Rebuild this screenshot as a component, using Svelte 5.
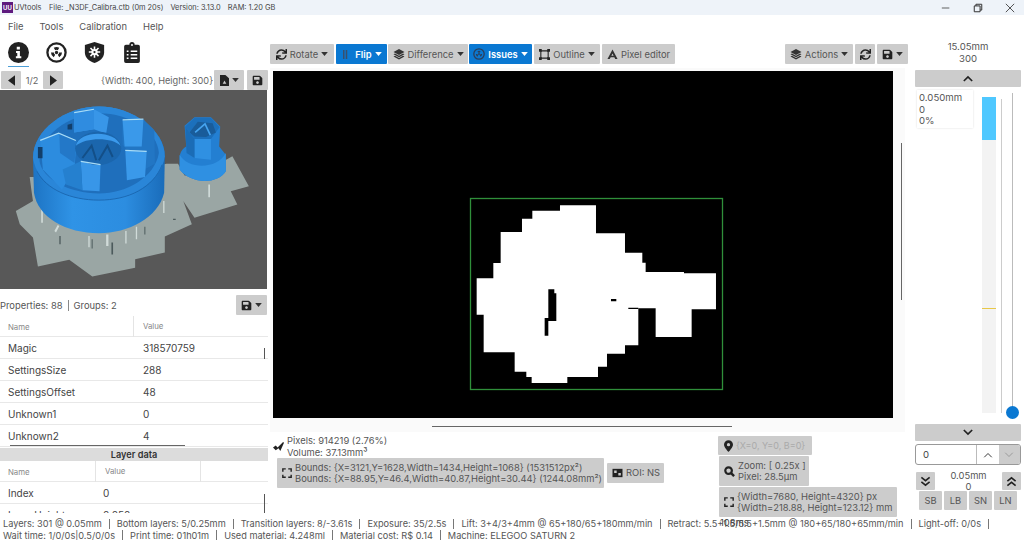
<script>
  const propertyRows = [
    ['Magic', '318570759'],
    ['SettingsSize', '288'],
    ['SettingsOffset', '48'],
    ['Unknown1', '0'],
    ['Unknown2', '4']
  ];
  const layerRows = [
    ['Index', '0'],
    ['LayerHeight', '0.050mm']
  ];
  const line1 = ['Layers: 301 @ 0.05mm', 'Bottom layers: 5/0.25mm', 'Transition layers: 8/-3.61s', 'Exposure: 35/2.5s', 'Lift: 3+4/3+4mm @ 65+180/65+180mm/min', 'Retract: 5.5+1.5/5.5+1.5mm @ 180+65/180+65mm/min', 'Light-off: 0/0s', ''];
  const line2 = ['Wait time: 1/0/0s|0.5/0/0s', 'Print time: 01h01m', 'Used material: 4.248ml', 'Material cost: R$ 0.14', 'Machine: ELEGOO SATURN 2'];

  const savePath = 'M433.941 129.941l-83.882-83.882A48 48 0 0 0 316.118 32H48C21.49 32 0 53.49 0 80v352c0 26.51 21.49 48 48 48h352c26.51 0 48-21.49 48-48V163.882a48 48 0 0 0-14.059-33.941zM224 416c-35.346 0-64-28.654-64-64 0-35.346 28.654-64 64-64s64 28.654 64 64c0 35.346-28.654 64-64 64zm96-304.52V212c0 6.627-5.373 12-12 12H76c-6.627 0-12-5.373-12-12V108c0-6.627 5.373-12 12-12h228.52c3.183 0 6.235 1.264 8.485 3.515l3.48 3.48A11.996 11.996 0 0 1 320 111.48z';
  const syncPath = 'M440.65 12.57l4 82.77A247.16 247.16 0 0 0 255.83 8C134.73 8 33.91 94.92 12.29 209.82A12 12 0 0 0 24.09 224h49.05a12 12 0 0 0 11.67-9.26 175.91 175.91 0 0 1 317-56.94l-101.46-4.86a12 12 0 0 0-12.57 12v47.41a12 12 0 0 0 12 12H500a12 12 0 0 0 12-12V12a12 12 0 0 0-12-12h-47.37a12 12 0 0 0-11.98 12.57zM255.83 432a175.61 175.61 0 0 1-146-77.8l101.8 4.87a12 12 0 0 0 12.57-12v-47.4a12 12 0 0 0-12-12H12a12 12 0 0 0-12 12V500a12 12 0 0 0 12 12h47.35a12 12 0 0 0 12-12.6l-4.15-82.57A247.17 247.17 0 0 0 255.83 504c121.11 0 221.93-86.92 243.55-201.82a12 12 0 0 0-11.8-14.18h-49.05a12 12 0 0 0-11.67 9.26A175.86 175.86 0 0 1 255.83 432z';
</script>

{#snippet caret(color = '#333')}
  <svg class="caret" viewBox="0 0 10 6" width="7" height="4"><path d="M0 0h10L5 6z" fill={color} /></svg>
{/snippet}

{#snippet save(size = 12)}
  <svg viewBox="0 0 448 512" width={size} height={size}><path d={savePath} fill="#222" /></svg>
{/snippet}

{#snippet sync(size = 12)}
  <svg viewBox="0 0 512 512" width={size} height={size}><path d={syncPath} fill="#222" /></svg>
{/snippet}

{#snippet layers(size = 12)}
  <svg viewBox="0 0 24 24" width={size} height={size}><path d="M12 2 23 8l-11 6L1 8zM4 11l8 4.4 8-4.4 3 1.6-11 6-11-6zm0 4.6 8 4.4 8-4.4 3 1.6-11 6-11-6z" fill="#333" /></svg>
{/snippet}

{#snippet corners(size = 12)}
  <svg viewBox="0 0 24 24" width={size} height={size}><path d="M2 9V2h7M15 2h7v7M22 16v6h-7M9 22H2v-6" fill="none" stroke="#222" stroke-width="3.4" /></svg>
{/snippet}

{#snippet radiation(size, fg, bg)}
  <svg viewBox="0 0 24 24" width={size} height={size}>
    <circle cx="12" cy="12" r="10.4" fill={bg} stroke={fg} stroke-width="2.6" />
    <circle cx="12" cy="12" r="1.9" fill={fg} />
    <path d="M8.9 6.6A6.3 6.3 0 0 1 15.1 6.6L13.5 9.4A3 3 0 0 0 10.5 9.4zM18.3 12A6.3 6.3 0 0 1 15.15 17.45L13.5 14.6A3 3 0 0 0 15 12zM8.85 17.45A6.3 6.3 0 0 1 5.7 12H9A3 3 0 0 0 10.5 14.6z" fill={fg} />
  </svg>
{/snippet}

<div class="app">
  <header class="title">
    <span class="logo">UU</span>
    <span class="name">UVtools</span>
    <span>File: _N3DF_Calibra.ctb (0m 20s)</span>
    <span>Version: 3.13.0</span>
    <span>RAM: 1.20 GB</span>
    <div class="win">
      <svg viewBox="0 0 12 12" width="10" height="10"><path d="M1 6h9" stroke="#444" stroke-width="1" /></svg>
      <svg viewBox="0 0 12 12" width="10" height="10"><path d="M1.5 3.5h7v7h-7zM3.5 3.5v-2h7v7h-2" fill="none" stroke="#333" stroke-width="1.2" /></svg>
      <svg viewBox="0 0 12 12" width="10" height="10"><path d="M1 1l10 10M11 1 1 11" stroke="#444" stroke-width="1.1" /></svg>
    </div>
  </header>

  <nav class="menu">
    <span>File</span><span>Tools</span><span>Calibration</span><span>Help</span>
  </nav>

  <main class="main">
    <section class="left">
      <div class="tabs">
        <div class="tab active">
          <svg viewBox="0 0 24 24" width="21" height="21"><circle cx="12" cy="12" r="12" fill="#222" /><path d="M10 5.5h3.6v3H10zM9.2 10.4h4.4v6h1.6v2.2H9v-2.2h1.6v-3.8H9.2z" fill="#fff" /></svg>
        </div>
        <div class="tab">{@render radiation(21, '#222', '#fff')}</div>
        <div class="tab">
          <svg viewBox="0 0 24 24" width="21" height="21">
            <path d="M12 0 23 3.4v8.4C23 18 18.4 22 12 24 5.6 22 1 18 1 11.8V3.4z" fill="#222" />
            <circle cx="12" cy="11.5" r="3.6" fill="#fff" />
            <path d="M12 5v13M5.5 11.5h13M7.4 6.9l9.2 9.2M16.6 6.9l-9.2 9.2" stroke="#fff" stroke-width="1.8" />
            <circle cx="12" cy="11.5" r="1.3" fill="#222" />
          </svg>
        </div>
        <div class="tab">
          <svg viewBox="0 0 18 24" width="16" height="21">
            <path d="M2 3h4a3 3 0 0 1 6 0h4a2 2 0 0 1 2 2v17a2 2 0 0 1-2 2H2a2 2 0 0 1-2-2V5a2 2 0 0 1 2-2z" fill="#222" />
            <circle cx="9" cy="3.4" r="1.1" fill="#fff" />
            <path d="M7.5 10.5H15M7.5 14.5H15M7.5 18.5H15M3 10.5h2M3 14.5h2M3 18.5h2" stroke="#fff" stroke-width="1.6" />
          </svg>
        </div>
      </div>

      <div class="pager">
        <button class="btn sq" aria-label="Previous"><svg viewBox="0 0 8 12" width="7" height="11"><path d="M8 0v12L0 6z" fill="#222" /></svg></button>
        <span class="page">1/2</span>
        <button class="btn sq" aria-label="Next"><svg viewBox="0 0 8 12" width="7" height="11"><path d="M0 0v12l8-6z" fill="#222" /></svg></button>
        <span class="dims">{'{'}Width: 400, Height: 300{'}'}</span>
        <button class="btn file" aria-label="Export">
          <svg viewBox="0 0 20 24" width="9" height="11"><path d="M0 0h12l8 7v17H0z" fill="#222" /><path d="M6 19l4-7 4 7z" fill="#ccc" /></svg>
          {@render caret()}
        </button>
        <button class="btn sq2" aria-label="Save">{@render save(11)}</button>
      </div>

      <div class="thumb">
        <svg viewBox="0 0 810 600" width="267" height="199" preserveAspectRatio="none">
          <defs>
            <linearGradient id="wall" x1="0" x2="1" y1="0" y2="0">
              <stop offset="0" stop-color="#1d74c4" />
              <stop offset=".3" stop-color="#2f93e6" />
              <stop offset=".7" stop-color="#2c8de0" />
              <stop offset="1" stop-color="#1a6cba" />
            </linearGradient>
          </defs>
          <rect width="810" height="600" fill="#585858" />
          <path d="M90 262H130V300L505 222H540L560 258H600L705 200 755 290 700 305 720 345 590 385 556 335 582 405 500 442V490L410 510V536L280 562 210 512 115 532 100 445 60 405 48 365 100 335 95 300z" fill="#9aa6a4" />
          <g fill="#dfe8e6" opacity=".8">
            <path d="M125 360h5v40h-5zM165 425l10-18 5 3-10 20zM268 440h4v34h-4zM322 436h7v34h-7zM380 425h4v38h-4zM412 412h4v38h-4zM495 335h4v36h-4zM632 285h5v38h-5z" />
          </g>
          <g fill="#4c5a5c">
            <path d="M180 440h4v25h-4zM278 450h3v28h-3zM338 460h5v36h-5zM438 412h3v24h-3zM525 388h8v4h-8z" />
          </g>

          <path d="M100 205C100 120 200 50 300 50 400 50 500 120 500 200L498 310C480 385 390 432 300 432 200 432 115 385 103 310z" fill="url(#wall)" />
          <path d="M100 205C100 120 200 50 300 50 400 50 500 120 500 200 490 275 400 332 300 332 200 332 112 285 100 205z" fill="#2a86d8" />
          <path d="M112 245C140 300 215 332 300 332 390 332 465 295 492 225" stroke="#1b68b2" stroke-width="3" fill="none" />
          <path d="M120 215C115 140 210 72 300 70 395 70 478 125 482 190 470 262 385 312 300 312 210 312 128 268 120 215z" fill="#1f6fbc" />

          <path d="M225 68 285 58 330 82 322 132 285 118 225 128z" fill="#3896e8" />
          <path d="M225 128 285 118 285 60 225 68z" fill="#2f8ce0" />
          <path d="M370 90 435 88 468 122 470 222 438 240 372 165z" fill="#2276c4" />
          <path d="M372 92 435 90 430 170 378 170z" fill="#3a99ea" />
          <path d="M122 152 178 130 232 152 226 240 188 300 130 240z" fill="#2c8cdf" />
          <path d="M180 130 232 152 226 220 182 190z" fill="#2378c8" />
          <path d="M380 182 445 185 440 262 385 272z" fill="#3a99ea" />
          <path d="M245 215 305 225 302 305 250 302z" fill="#3896e8" />
          <path d="M190 240 245 215 250 302 200 285z" fill="#2580cf" />
          <ellipse cx="298" cy="176" rx="70" ry="50" fill="#1b66ad" />
          <path d="M230 168C240 122 348 118 366 168 340 142 262 142 230 168z" fill="#3b9aec" />
          <path d="M250 205 278 168 292 212M300 212 326 168 342 202" stroke="#134f88" stroke-width="6" fill="none" />
          <path d="M115 172h14v34h-14zM205 105l14-4v18h-14z" fill="#123e6a" />
          <path d="M225 68 285 58M372 90 435 88M122 152 178 130 230 152M380 182 445 185M245 215 305 225" stroke="#a8dcf6" stroke-width="3.5" fill="none" />

          <path d="M545 200C548 178 565 170 565 170L560 108 590 82 640 82 668 110 665 170 685 195V245C660 285 580 285 545 240z" fill="#237fd2" />
          <path d="M545 195C570 240 660 240 685 190V245C660 285 580 285 545 240z" fill="#2f90e2" />
          <path d="M562 110 590 84 640 84 666 112 640 148 590 148z" fill="#1c70bc" />
          <path d="M575 128 600 96 645 100 655 128 625 142 590 140z" fill="#195c9a" />
          <path d="M592 128 622 102 638 136" stroke="#45a4f0" stroke-width="5" fill="none" />
          <path d="M590 148 640 148 640 210 590 205z" fill="#2f90e2" />
          <path d="M562 110 590 148 590 205 566 190z" fill="#1b6cb6" />
        </svg>
      </div>

      <div class="props-head">
        <span>Properties: 88</span><i></i><span>Groups: 2</span>
        <button class="btn file" aria-label="Save properties">{@render save(11)}{@render caret()}</button>
      </div>

      <div class="grid-head props"><span>Name</span><span>Value</span></div>
      <div class="rows">
        {#each propertyRows as row}
          <div class="row props"><span>{row[0]}</span><span>{row[1]}</span></div>
        {/each}
        <div class="vbar one"></div>
      </div>
      <div class="hbar"></div>

      <div class="layer-title">Layer data</div>
      <div class="grid-head layer"><span>Name</span><span>Value</span><span></span></div>
      <div class="rows clipped">
        {#each layerRows as row}
          <div class="row layer"><span>{row[0]}</span><span>{row[1]}</span></div>
        {/each}
        <div class="vbar two"></div>
      </div>
    </section>

    <section class="center">
      <div class="toolbar">
        <button class="btn tool w64">{@render sync(11)}Rotate{@render caret()}</button>
        <button class="btn tool blue w51">
          <svg viewBox="0 0 12 12" width="11" height="11"><path d="M3 1v10M6 1v10" stroke="#3a4f6a" stroke-width="1.6" /></svg>
          Flip{@render caret('#fff')}
        </button>
        <button class="btn tool w80">{@render layers()}Difference{@render caret()}</button>
        <button class="btn tool blue w63">{@render radiation(12, '#2b3f5c', '#0a78d2')}Issues{@render caret('#fff')}</button>
        <button class="btn tool w66">
          <svg viewBox="0 0 12 12" width="11" height="11"><path d="M2 2h8v8H2z" fill="none" stroke="#222" stroke-width="1.2" /><path d="M0 0h3v3H0zM9 0h3v3H9zM0 9h3v3H0zM9 9h3v3H9z" fill="#222" /></svg>
          Outline{@render caret()}
        </button>
        <button class="btn tool w73">
          <svg viewBox="0 0 12 12" width="11" height="11"><path d="M6 .5 11.5 11H9L8 9H4l-1 2H.5zM6 5 4.8 7.4h2.4z" fill="#333" /></svg>
          Pixel editor
        </button>
        <span class="spacer"></span>
        <button class="btn tool w68">{@render layers()}Actions{@render caret()}</button>
        <button class="btn tool icon" aria-label="Refresh">{@render sync(11)}</button>
        <button class="btn tool icon2" aria-label="Save">{@render save(11)}{@render caret()}</button>
      </div>

      <div class="viewport">
        <div class="canvas">
          <svg viewBox="0 0 620 347" width="620" height="347">
            <rect x="197.5" y="127.5" width="252" height="191" fill="none" stroke="#2f8f3a" stroke-width="1.3" />
            <g transform="translate(187 119) scale(.3333)">
              <path fill="#fff" d="M300 46H408V130H495V188H547V218H557V246H672V250H768V358H695V441H587V355H535V466H495V491H441V530H414V561H322V579H215V561H199V545H164V487H71V374H50V265H100V219H122V126H186V86H217V62H300z" />
              <path fill="#000" d="M265 298H283V310H289V393H265V437H254V384H265zM453 327H469V334H453zM505 353H535V357H505z" />
            </g>
          </svg>
        </div>
        <div class="scroll-h"></div>
        <div class="scroll-v"></div>
      </div>

      <div class="info">
        <div class="info-left">
          <div class="pixels">
            <svg viewBox="0 0 12 12" width="11" height="11"><path d="M0 7 3 5l2 2 6-6 1 1-4 9-2-3-3 2z" fill="#222" /></svg>
            <div>Pixels: 914219 (2.76%)<br />Volume: 37.13mm³</div>
          </div>
          <div class="bounds-row">
            <div class="chip bounds">
              {@render corners(10)}
              <div>Bounds: {'{'}X=3121,Y=1628,Width=1434,Height=1068{'}'} (1531512px²)<br />Bounds: {'{'}X=88.95,Y=46.4,Width=40.87,Height=30.44{'}'} (1244.08mm²)</div>
            </div>
            <div class="chip roi">
              <svg viewBox="0 0 12 12" width="11" height="10"><path d="M0 1h12v10H0z" fill="#222" /><path d="M2 3h3v3H2zM7 6h3v3H7z" fill="#ccc" /></svg>
              ROI: NS
            </div>
          </div>
        </div>
        <div class="info-right">
          <div class="chip pos">
            <svg viewBox="0 0 10 13" width="9" height="12"><path fill-rule="evenodd" d="M5 0a5 5 0 0 1 5 5c0 3-5 8-5 8S0 8 0 5a5 5 0 0 1 5-5zm0 3.2a1.8 1.8 0 1 0 0 3.6 1.8 1.8 0 0 0 0-3.6z" fill="#222" /></svg>
            <span>{'{'}X=0, Y=0, B=0{'}'}</span>
          </div>
          <div class="chip zoom">
            <svg viewBox="0 0 12 12" width="11" height="11"><circle cx="5" cy="5" r="3.6" fill="none" stroke="#222" stroke-width="2.4" /><path d="M7.5 7.5 11 11" stroke="#222" stroke-width="2.6" /></svg>
            <div>Zoom: [ 0.25x ]<br />Pixel: 28.5µm</div>
          </div>
          <div class="chip size">
            {@render corners(10)}
            <div>{'{'}Width=7680, Height=4320{'}'} px<br />{'{'}Width=218.88, Height=123.12{'}'} mm</div>
          </div>
          <span class="ms">108ms</span>
        </div>
      </div>
    </section>

    <aside class="right">
      <div class="top-read">15.05mm<br />300</div>
      <button class="btn wide" aria-label="Up"><svg viewBox="0 0 12 8" width="10" height="7"><path d="M1 7l5-5 5 5" fill="none" stroke="#222" stroke-width="2" /></svg></button>
      <div class="slider">
        <div class="tip">0.050mm<br />0<br />0%</div>
        <div class="track">
          <div class="fill"></div>
          <div class="mark"></div>
        </div>
        <div class="line a"></div>
        <div class="line b"></div>
        <div class="thumb-dot"></div>
      </div>
      <button class="btn wide" aria-label="Down"><svg viewBox="0 0 12 8" width="10" height="7"><path d="M1 1l5 5 5-5" fill="none" stroke="#222" stroke-width="2" /></svg></button>
      <div class="spin">
        <span class="val">0</span>
        <span class="arrow"><svg viewBox="0 0 12 8" width="10" height="6"><path d="M1 7l5-5 5 5" fill="none" stroke="#333" stroke-width="1.3" /></svg></span>
        <span class="arrow off"><svg viewBox="0 0 12 8" width="10" height="6"><path d="M1 1l5 5 5-5" fill="none" stroke="#999" stroke-width="1.3" /></svg></span>
      </div>
      <div class="step">
        <button class="btn dbl" aria-label="Down by step"><svg viewBox="0 0 12 12" width="11" height="11"><path d="M1.5 1.5 6 5l4.5-3.5M1.5 6.5 6 10l4.5-3.5" fill="none" stroke="#222" stroke-width="1.8" /></svg></button>
        <div class="step-text">0.05mm<br />0</div>
        <button class="btn dbl" aria-label="Up by step"><svg viewBox="0 0 12 12" width="11" height="11"><path d="M1.5 5.5 6 2l4.5 3.5M1.5 10.5 6 7l4.5 3.5" fill="none" stroke="#222" stroke-width="1.8" /></svg></button>
      </div>
      <div class="jump">
        <button class="btn">SB</button><button class="btn">LB</button><button class="btn">SN</button><button class="btn">LN</button>
      </div>
    </aside>
  </main>

  <footer class="status">
    <div>
      {#each line1 as item, i}
        {#if i > 0}<i></i>{/if}<span>{item}</span>
      {/each}
    </div>
    <div>
      {#each line2 as item, i}
        {#if i > 0}<i></i>{/if}<span>{item}</span>
      {/each}
    </div>
  </footer>
</div>

<style>
  :global(body) {
    margin: 0;
    background: #fff;
  }

  .app {
    width: 1024px;
    height: 540px;
    overflow: hidden;
    display: grid;
    grid-template-rows: 15px 23px 478px 24px;
    font-family: Inter, 'Liberation Sans', sans-serif;
    font-size: 10px;
    color: #444;
    background: #fff;
  }

  svg {
    display: block;
    flex: none;
  }

  button {
    font: inherit;
    color: inherit;
    border: 0;
    padding: 0;
  }

  .btn {
    background: #ccc;
    border-radius: 1px;
    display: flex;
    align-items: center;
    justify-content: center;
  }

  .title {
    background: #eef3f9;
    display: flex;
    align-items: center;
    gap: 7px;
    padding-left: 2px;
    font-size: 7.4px;
    color: #444;
  }

  .logo {
    width: 11px;
    height: 11px;
    background: #5e1a7e;
    color: #fff;
    font-size: 6px;
    line-height: 11px;
    text-align: center;
    font-weight: 700;
    margin-right: -6px;
  }

  .name {
    width: 28px;
  }

  .win {
    margin-left: auto;
    display: flex;
    gap: 22px;
    padding-right: 9px;
  }

  .menu {
    display: flex;
    align-items: center;
    gap: 16px;
    padding-left: 8px;
    font-size: 9.4px;
    color: #555;
  }

  .main {
    display: grid;
    grid-template-columns: 268px 640px 116px;
    min-height: 0;
  }

  .left {
    min-width: 0;
    overflow: hidden;
  }

  .tabs {
    display: flex;
    height: 29px;
    padding-left: 8px;
    gap: 17px;
    align-items: flex-start;
    padding-top: 4px;
    box-sizing: border-box;
  }

  .tab {
    height: 25px;
    width: 21px;
    display: flex;
    justify-content: center;
    box-sizing: border-box;
  }

  .tab.active {
    border-bottom: 1px solid #4c9ed6;
  }

  .tab:last-child {
    margin-left: -1px;
  }

  .pager {
    height: 20px;
    margin-top: 3px;
    display: flex;
    align-items: center;
    font-size: 9.2px;
    color: #666;
    padding-left: 1px;
  }

  .sq {
    width: 20px;
    height: 18px;
  }

  .page {
    width: 22px;
    text-align: center;
  }

  .dims {
    margin-left: 38px;
    width: 113px;
    white-space: nowrap;
  }

  .pager .file {
    width: 30px;
    height: 20px;
    gap: 3px;
  }

  .sq2 {
    width: 21px;
    height: 20px;
    margin-left: 3px;
  }

  .thumb {
    height: 199px;
    width: 267px;
  }

  .props-head {
    height: 22px;
    margin-top: 5px;
    display: flex;
    align-items: center;
    gap: 5px;
    font-size: 9.4px;
    color: #555;
  }

  .props-head i {
    width: 1px;
    height: 11px;
    background: #888;
  }

  .props-head .file {
    margin-left: auto;
    margin-right: 1px;
    width: 31px;
    height: 20px;
    gap: 3px;
  }

  .grid-head,
  .row {
    display: grid;
    align-items: center;
    border-bottom: 1px solid #e8e8e8;
    padding-left: 8px;
    box-sizing: border-box;
  }

  .props {
    grid-template-columns: 125px 1fr;
  }

  .layer {
    grid-template-columns: 87px 105px 1fr;
  }

  .grid-head {
    height: 21px;
    font-size: 7.8px;
    color: #888;
  }

  .grid-head span + span {
    border-left: 1px solid #e4e4e4;
    height: 21px;
    line-height: 21px;
    padding-left: 9px;
  }

  .row {
    height: 22px;
    font-size: 10px;
  }

  .row span + span {
    padding-left: 10px;
  }

  .layer.row span + span {
    padding-left: 8px;
  }

  .rows {
    position: relative;
  }

  .vbar {
    position: absolute;
    right: 3px;
    width: 1px;
    background: #555;
  }

  .vbar.one {
    top: 11px;
    height: 11px;
  }

  .vbar.two {
    top: 12px;
    height: 22px;
  }

  .hbar {
    height: 1px;
    width: 175px;
    margin: -2px 0 1px 10px;
    background: #666;
    position: relative;
  }

  .layer-title {
    margin-top: 2px;
    height: 13px;
    line-height: 13px;
    background: #dcdcdc;
    text-align: center;
    font-weight: 600;
    font-size: 9.2px;
    color: #333;
  }

  .clipped {
    height: 31px;
    overflow: hidden;
  }

  .center {
    min-width: 0;
    display: flex;
    flex-direction: column;
  }

  .toolbar {
    display: flex;
    gap: 2px;
    padding: 6px 0 0 2px;
    height: 20px;
  }

  .tool {
    height: 20px;
    padding: 0;
    gap: 3px;
    color: #555;
    font-size: 9.4px;
    flex: none;
  }

  .w51 { width: 51px; }
  .w63 { width: 63px; }
  .w64 { width: 64px; }
  .w66 { width: 66px; }
  .w68 { width: 68px; }
  .w73 { width: 73px; }
  .w80 { width: 80px; }

  .toolbar .w51,
  .toolbar .w80 {
    margin-right: -1px;
  }

  .blue {
    background: #0a78d2;
    color: #fff;
    font-weight: 600;
  }

  .spacer {
    flex: 1;
  }

  .tool.icon {
    width: 20px;
  }

  .tool.icon2 {
    width: 31px;
  }

  .viewport {
    position: relative;
    margin: 4px 3px 0 2px;
    height: 364px;
    background: #fafafa;
    padding: 3px 12px 0 3px;
    box-sizing: border-box;
  }

  .canvas {
    width: 620px;
    height: 347px;
    background: #000;
  }

  .scroll-h {
    position: absolute;
    left: 162px;
    bottom: 5px;
    width: 300px;
    height: 1px;
    background: #666;
  }

  .scroll-v {
    position: absolute;
    right: 3px;
    top: 75px;
    height: 157px;
    width: 1px;
    background: #666;
  }

  .info {
    display: flex;
    font-size: 9.4px;
    color: #555;
    flex: 1;
    position: relative;
  }

  .info-left {
    padding: 3px 0 0 5px;
    width: 444px;
    box-sizing: border-box;
  }

  .pixels {
    display: flex;
    gap: 3px;
    align-items: center;
    line-height: 11.5px;
  }

  .bounds-row {
    display: flex;
    align-items: center;
    gap: 3px;
    margin-left: 4px;
  }

  .chip {
    background: #ccc;
    display: flex;
    align-items: center;
    gap: 3px;
    border-radius: 1px;
    line-height: 11.5px;
    box-sizing: border-box;
    white-space: nowrap;
  }

  .bounds {
    width: 327px;
    height: 30px;
    padding-left: 5px;
  }

  .roi {
    width: 57px;
    height: 20px;
    padding-left: 5px;
  }

  .info-right {
    position: relative;
    display: flex;
    flex-direction: column;
    gap: 1px;
    padding-top: 4px;
    align-items: flex-start;
    margin-left: 6px;
  }

  .pos {
    width: 94px;
    height: 19px;
    padding-left: 6px;
    color: #aaa;
    font-size: 9px;
  }

  .zoom {
    width: 90px;
    height: 30px;
    margin-left: 1px;
    padding-left: 5px;
  }

  .size {
    width: 178px;
    height: 30px;
    margin-left: 1px;
    padding-left: 5px;
  }

  .ms {
    position: absolute;
    left: 2px;
    top: 85px;
    color: #444;
    font-size: 9.4px;
    z-index: 3;
  }

  .right {
    padding: 0 3px 0 7px;
    display: flex;
    flex-direction: column;
    min-width: 0;
  }

  .top-read {
    text-align: center;
    font-size: 9.6px;
    line-height: 11.5px;
    height: 27px;
    padding-top: 1px;
    box-sizing: border-box;
    color: #555;
    margin-top: 2px;
    margin-bottom: 3px;
  }

  .wide {
    height: 17px;
    width: 106px;
    flex: none;
  }

  .slider {
    position: relative;
    height: 337px;
  }

  .tip {
    position: absolute;
    left: 2px;
    top: 3px;
    width: 56px;
    height: 38px;
    padding: 2px 0 0 2px;
    box-sizing: border-box;
    line-height: 11.5px;
    font-size: 9.6px;
    background: #fff;
    box-shadow: 0 0 2px #ddd;
    color: #555;
  }

  .track {
    position: absolute;
    left: 67px;
    top: 10px;
    width: 14px;
    height: 316px;
    background: #f3f3f3;
  }

  .fill {
    height: 43px;
    background: #4fc8ff;
  }

  .mark {
    position: absolute;
    top: 211px;
    left: 0;
    right: 0;
    height: 1px;
    background: #e8c848;
  }

  .line {
    position: absolute;
    width: 1px;
    background: #ccc;
  }

  .line.a {
    left: 86px;
    top: 12px;
    height: 314px;
  }

  .line.b {
    left: 97px;
    top: 6px;
    height: 320px;
    background: #bbb;
  }

  .thumb-dot {
    position: absolute;
    left: 91px;
    top: 319px;
    width: 13px;
    height: 13px;
    border-radius: 50%;
    background: #0a78d2;
  }

  .spin {
    display: flex;
    height: 21px;
    margin-top: 3px;
    width: 106px;
    border: 1px solid #999;
    border-radius: 3px;
    box-sizing: border-box;
    overflow: hidden;
    align-items: stretch;
  }

  .val {
    width: 61px;
    line-height: 19px;
    padding-left: 7px;
    box-sizing: border-box;
    border-right: 1px solid #bbb;
    font-size: 9.6px;
  }

  .arrow {
    flex: 1;
    display: flex;
    align-items: center;
    justify-content: center;
  }

  .arrow.off {
    background: #ccc;
  }

  .step {
    display: flex;
    align-items: center;
    justify-content: space-between;
    margin-top: 5px;
    height: 22px;
    width: 106px;
    padding: 0 0 0 1px;
    box-sizing: border-box;
  }

  .dbl {
    width: 19px;
    height: 18px;
  }

  .step-text {
    text-align: center;
    font-size: 9.4px;
    line-height: 11.5px;
    color: #555;
  }

  .jump {
    display: flex;
    gap: 2px;
    margin: -1px 0 0 4px;
  }

  .jump .btn {
    width: 23px;
    height: 19px;
    font-size: 9.4px;
    color: #555;
  }

  .status {
    position: relative;
    font-size: 9.2px;
    line-height: 11.5px;
    padding: 2px 0 0 3px;
    color: #555;
    white-space: nowrap;
  }

  .status > div {
    display: flex;
    align-items: center;
    height: 11.5px;
  }

  .status i {
    width: 1px;
    height: 10px;
    background: #777;
    margin: 0 7px;
    flex: none;
  }
</style>
